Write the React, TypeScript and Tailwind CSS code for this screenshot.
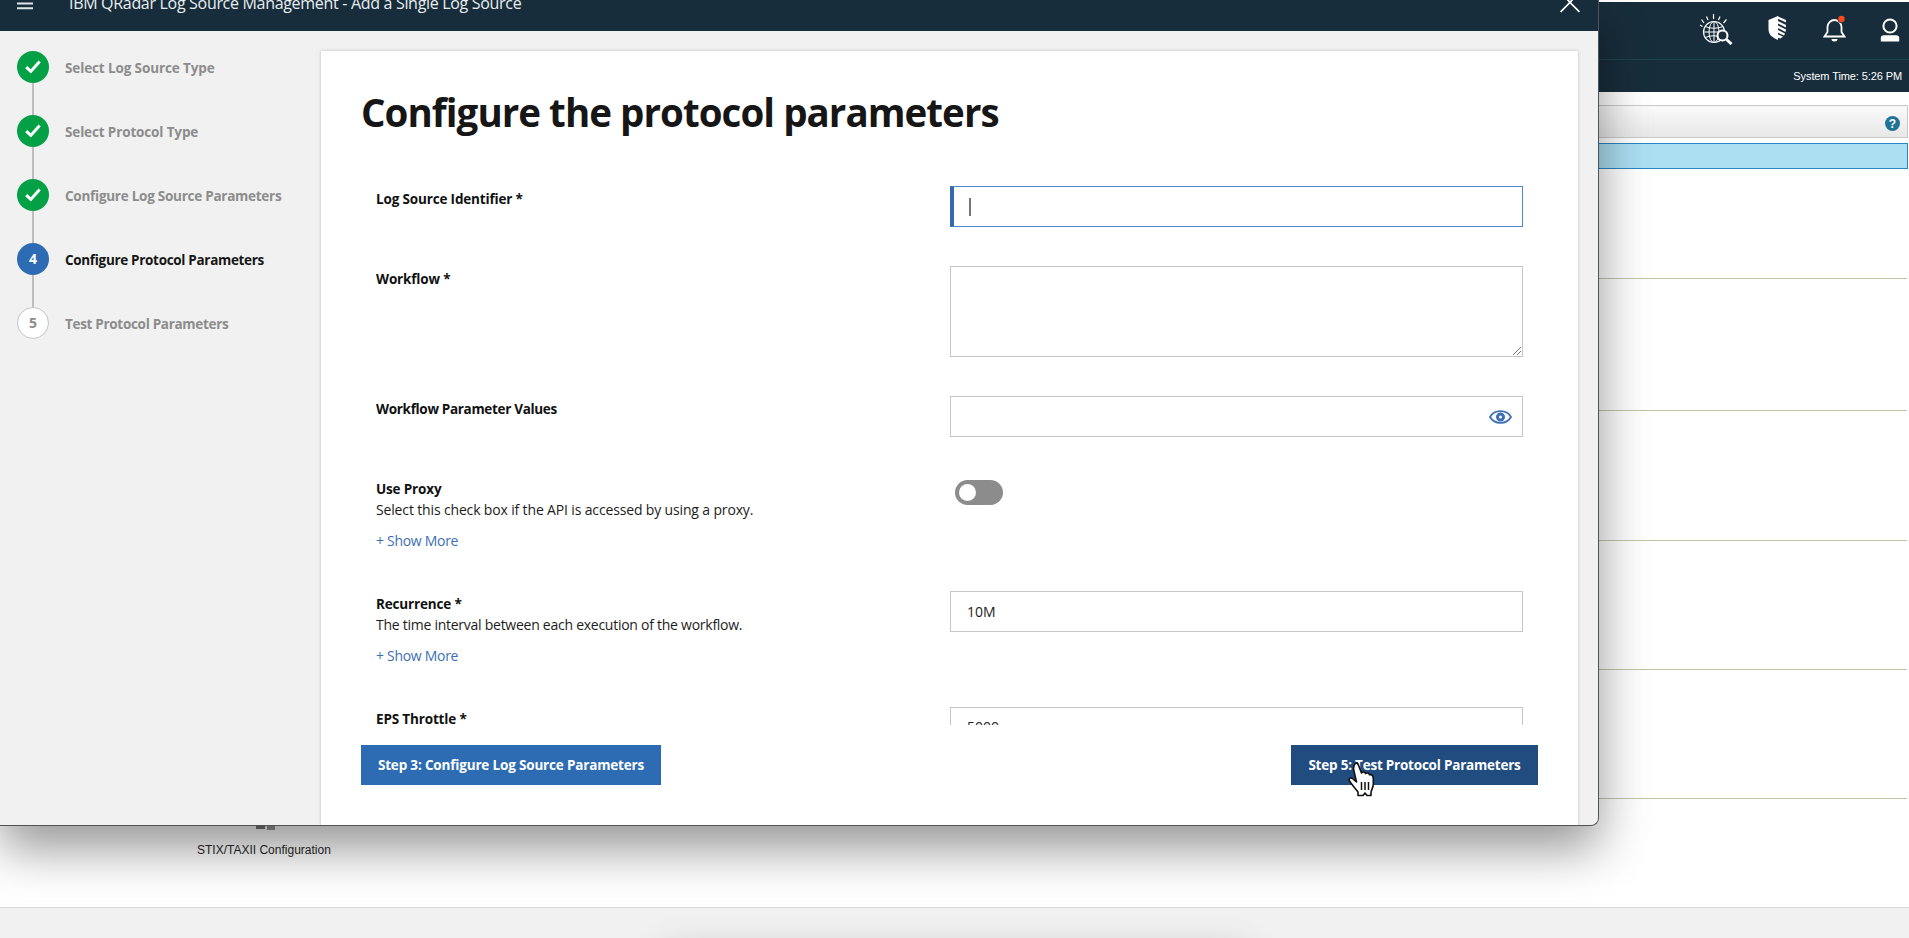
import React from "react";

const steps = [
  { n: 1, label: "Select Log Source Type", state: "done", track: "tracking-[-0.12px]" },
  { n: 2, label: "Select Protocol Type", state: "done", track: "tracking-[-0.14px]" },
  { n: 3, label: "Configure Log Source Parameters", state: "done", track: "tracking-[-0.26px]" },
  { n: 4, label: "Configure Protocol Parameters", state: "current", track: "tracking-[-0.32px]" },
  { n: 5, label: "Test Protocol Parameters", state: "todo", track: "tracking-[-0.31px]" },
];

function StepMarker({ n, state }: { n: number; state: string }) {
  if (state === "done") {
    return (
      <span className="flex size-8 items-center justify-center rounded-full bg-[#03a046]">
        <svg width="16" height="14" viewBox="0 0 16 14" fill="none" stroke="#fff" strokeWidth="3">
          <path d="M1.2 7.2 5.8 11.4 14.6 1.6" />
        </svg>
      </span>
    );
  }
  if (state === "current") {
    return (
      <span className="flex size-8 items-center justify-center rounded-full bg-[#2d6cb3] text-sm font-bold text-white">{n}</span>
    );
  }
  return (
    <span className="flex size-8 items-center justify-center rounded-full border border-[#c4c4c4] bg-white text-sm font-bold text-[#8c8c8c]">{n}</span>
  );
}

function Stepper() {
  return (
    <ol className="w-[321px] shrink-0 pt-5 pl-[17px]">
      {steps.map((s, i) => (
        <li key={s.n} className="flex h-16 gap-4">
          <div className="flex flex-col items-center">
            <StepMarker n={s.n} state={s.state} />
            {i < steps.length - 1 && <span className="h-8 w-[2px] bg-[#bdbdbd]" />}
          </div>
          <span className={`h-8 text-[13.5px] leading-[35px] font-bold whitespace-nowrap ${s.track} ${s.state === "current" ? "text-[#161616]" : "text-[#8c8c8c]"}`}>
            {s.label}
          </span>
        </li>
      ))}
    </ol>
  );
}

type FieldProps = {
  label: string;
  help?: string;
  className: string;
  labelTrack?: string;
  helpTrack?: string;
  children: React.ReactNode;
};

function Field({ label, help, className, labelTrack = "tracking-[-0.16px]", helpTrack = "", children }: FieldProps) {
  return (
    <div className={`flex shrink-0 ${className}`}>
      <div className="w-[574px] shrink-0 pt-[3px] text-[14px] leading-[21px] text-[#1c1c1c]">
        <div className={`-mb-px text-[13.5px] font-bold text-[#111] ${labelTrack}`}>{label}</div>
        {help && (
          <>
            <div className={helpTrack}>{help}</div>
            <div className="mt-[10px] tracking-[-0.3px] text-[#3d70b2]">+ Show More</div>
          </>
        )}
      </div>
      {children}
    </div>
  );
}

function Modal() {
  return (
    <section className="absolute top-0 left-0 flex h-[826px] w-[1599px] flex-col overflow-hidden rounded-br-lg border-r border-b border-[#4c5555] bg-[#f1f1f1] font-['Open_Sans',sans-serif]">
      <header className="flex h-[31px] shrink-0 items-start bg-[#182d3b] text-[#e8edf0]">
        <svg className="ml-[17px]" width="17" height="10" viewBox="0 0 17 10" stroke="#dfe5e8" strokeWidth="2">
          <path d="M0 3.5H16M0 8.2H16" />
        </svg>
        <h2 className="mt-[-9px] ml-[35px] text-[16px] leading-6 tracking-[-0.31px] whitespace-nowrap">IBM QRadar Log Source Management - Add a Single Log Source</h2>
        <svg className="mr-[18px] ml-auto" width="20" height="13" viewBox="0 0 20 13" fill="none" stroke="#fff" strokeWidth="1.7">
          <path d="M.6 11.8 10 2.4 19.4 11.8M7 -1 10 2.4 13 -1" />
        </svg>
      </header>
      <div className="flex min-h-0 flex-1">
        <Stepper />
        <main className="mt-5 flex w-[1257px] flex-col bg-white shadow-[0_0_3px_rgba(0,0,0,0.22)]">
          <h1 className="mt-[30px] ml-10 text-[38.5px] leading-[62px] font-bold tracking-[-0.95px] whitespace-nowrap text-[#161616]">
            Configure the protocol parameters
          </h1>
          <div className="mt-[43px] ml-[55px] flex h-[539px] flex-col overflow-hidden">
            <Field label="Log Source Identifier *" className="h-20">
              <div className="flex h-[41px] w-[573px] items-center border border-l-4 border-[#5088c8] border-l-[#3568ad] pl-[15px]">
                <span className="h-[18px] w-[2px] bg-[#777]" />
              </div>
            </Field>
            <Field label="Workflow *" className="h-[130px]">
              <div className="flex h-[91px] w-[573px] items-end justify-end border border-[#c6c6c6]">
                <svg width="10" height="10" viewBox="0 0 10 10" stroke="#777">
                  <path d="M1 9 9 1M5 9 9 5" />
                </svg>
              </div>
            </Field>
            <Field label="Workflow Parameter Values" labelTrack="tracking-[-0.32px]" className="h-20">
              <div className="flex h-[41px] w-[573px] items-center justify-end border border-[#c6c6c6] pr-[10px]">
                <svg width="23" height="14" viewBox="0 0 23 14" fill="none" stroke="#3d70b2" strokeWidth="1.800">
                  <path d="M1 7C5.500-.8 17.500-.8 22 7 17.500 14.800 5.500 14.800 1 7Z" />
                  <circle cx="11.500" cy="7" r="3" strokeWidth="3" />
                </svg>
              </div>
            </Field>
            <Field label="Use Proxy" help="Select this check box if the API is accessed by using a proxy." helpTrack="tracking-[-0.15px]" className="h-[115px]">
              <div className="mt-1 ml-[5px] flex h-[25px] w-12 items-center rounded-full bg-[#8c8c8c] pl-1">
                <span className="size-[17px] rounded-full bg-white" />
              </div>
            </Field>
            <Field label="Recurrence *" help="The time interval between each execution of the workflow." helpTrack="tracking-[-0.26px]" className="h-[115px]">
              <div className="h-[41px] w-[573px] border border-[#c6c6c6] pl-4 text-[14px] leading-[39px] text-[#1c1c1c]">10M</div>
            </Field>
            <Field label="EPS Throttle *" className="h-[60px]">
              <div className="mt-px h-[41px] w-[573px] border border-[#c6c6c6] pl-4 text-[14px] leading-[37px] text-[#1c1c1c]">5000</div>
            </Field>
          </div>
          <div className="mt-5 flex w-[1217px] justify-between pl-10 text-[13.5px] font-bold whitespace-nowrap text-white">
            <div className="h-10 w-[300px] bg-[#2d6cb3] text-center leading-[40px] tracking-[-0.17px]">Step 3: Configure Log Source Parameters</div>
            <div className="h-10 w-[247px] bg-[#204c80] text-center leading-[40px] tracking-[-0.22px]">Step 5: Test Protocol Parameters</div>
          </div>
        </main>
      </div>
    </section>
  );
}

function TopIcons() {
  return (
    <div className="flex h-[58px] items-start justify-end border-b border-[#1c4450] text-white">
      <svg className="mt-3 mr-[35px]" width="33" height="31" viewBox="0 0 33 31" fill="none" stroke="#fff">
        <path d="M1.500 5.500 4 9M6.500 2.500 8 6M13.500 0V5M20 2.500 18.500 6M26.500 5.500 23.500 9M0 11 2.500 12.500" strokeWidth="1.200" />
        <circle cx="14" cy="18" r="10.500" strokeWidth="1.200" />
        <ellipse cx="14" cy="18" rx="5" ry="10.500" />
        <path d="M14 7.500V28.500M3.500 18H24M5 12.500Q14 16 23 12.500M5 23.500Q14 20 21 23.500" />
        <circle cx="22.500" cy="21.500" r="5" fill="#182d3b" strokeWidth="2" />
        <path d="m26.500 25.500 5 4.500" strokeWidth="3" />
      </svg>
      <svg className="mt-[14px] mr-[36px]" width="19" height="24" viewBox="0 0 19 24" fill="#fff">
        <path d="M10 0V24C4 21.500.5 18.500.5 13V4Z" />
        <path d="M9 0 18 4V6.500L9 2.400ZM9 4.500 18 9V11.500L9 7ZM9 9 18 13.500 17.500 16 9 11.600ZM9 13.500 17 17.500 16 19.500 9 16.200ZM9 18 15 20.500 12.500 22.500 9 21.500Z" />
      </svg>
      <svg className="mt-[12px] mr-[34px]" width="23" height="28" viewBox="0 0 23 28" fill="none" stroke="#fff" strokeWidth="1.800">
        <path d="M1.500 22.500 4.500 18V13A7 7 0 0 1 11.500 6 7 7 0 0 1 18.500 13V18L21.500 22.500Z" />
        <path d="M8.500 25H14.500A3 2.500 0 0 1 8.500 25Z" fill="#fff" stroke="none" />
        <circle cx="18.500" cy="5" r="4" fill="#182d3b" stroke="none" />
        <circle cx="18.500" cy="5" r="3.200" fill="#f9491c" stroke="none" />
      </svg>
      <svg className="mt-[16px] mr-[9px]" width="20" height="24" viewBox="0 0 20 24" fill="none" stroke="#fff" strokeWidth="2">
        <circle cx="10" cy="8" r="6.600" />
        <path d="M.8 23.500V20Q.8 17.300 4 17.300H16Q19.200 17.300 19.200 20V23.500Z" fill="#fff" stroke="none" />
      </svg>
    </div>
  );
}

export default function App() {
  return (
    <div className="relative flex h-[938px] w-[1909px] flex-col overflow-hidden bg-white font-['Liberation_Sans',Arial,sans-serif]">
      <div className="flex flex-1 flex-col pt-[2px] pr-0">
        <div className="h-[90px] bg-[#182d3b]">
          <TopIcons />
          <div className="pt-[7px] pr-[7px] text-right text-[11px] leading-[18px] tracking-[-0.1px] text-white">System Time: 5:26 PM</div>
        </div>
        <div className="mt-[13px] mr-px flex h-[33px] items-center justify-end border border-[#c9c9c9] bg-gradient-to-b from-[#fafafa] to-[#e8e8e8] pr-[7px]">
          <span className="mt-1 flex size-[15px] items-center justify-center rounded-full bg-[#1f7496] text-[12px] leading-none font-bold text-white">?</span>
        </div>
        <div className="mt-[5px] mr-px h-[26px] border border-[#2a86c4] bg-[#abdff2]" />
        <div className="mr-[2px] h-[110px] border-b border-[#c3c3aa]" />
        <div className="mr-[2px] h-[132px] border-b border-[#c3c3aa]" />
        <div className="mr-[2px] h-[130px] border-b border-[#c3c3aa]" />
        <div className="mr-[2px] h-[129px] border-b border-[#c3c3aa]" />
        <div className="mr-[2px] h-[129px] border-b border-[#c3c3aa]" />
        <div className="ml-[256px] flex pt-[25px]">
          <span className="h-[5px] w-[9px] bg-[#777]" />
          <span className="ml-[2px] h-[6px] w-[8px] bg-[#999]" />
        </div>
      </div>
      <footer className="h-[31px] shrink-0 border-t border-[#d8d8d8] bg-[#f1f1f1]" />
      <div className="absolute top-0 left-0 h-[826px] w-[1599px] rounded-lg shadow-[0_22px_50px_rgba(0,0,0,0.42)]" />
      <div className="absolute top-[843px] left-[197px] text-[12px] leading-[15px] whitespace-nowrap text-[#1c1c1c]">STIX/TAXII Configuration</div>
      <div className="absolute top-[956px] left-[670px] h-5 w-[570px] shadow-[0_0_34px_8px_rgba(0,0,0,0.16)]" />
      <Modal />
      <svg className="absolute top-[762px] left-[1347px]" width="30" height="36" viewBox="0 0 30 36">
        <path d="M7 3.500C9-.5 11 1 11.800 4L14.500 11C15.500 9.500 18 9.800 18.500 11.500 20 10.500 22 11 22.500 12.800 25 12 26.300 14 26.300 17V22C26.300 26 24 28 24 31V33.500H20L18 31 16 33.500H11V30C8 26 5 23 2.500 19 1 16 4 15 6 17L9.500 20 6.500 7Z" fill="#fff" stroke="#111" strokeWidth="1.600" strokeLinejoin="round" />
        <path d="M14.500 20V28M18 20V28M21.500 20V28" stroke="#111" strokeWidth="1.500" />
      </svg>
    </div>
  );
}
